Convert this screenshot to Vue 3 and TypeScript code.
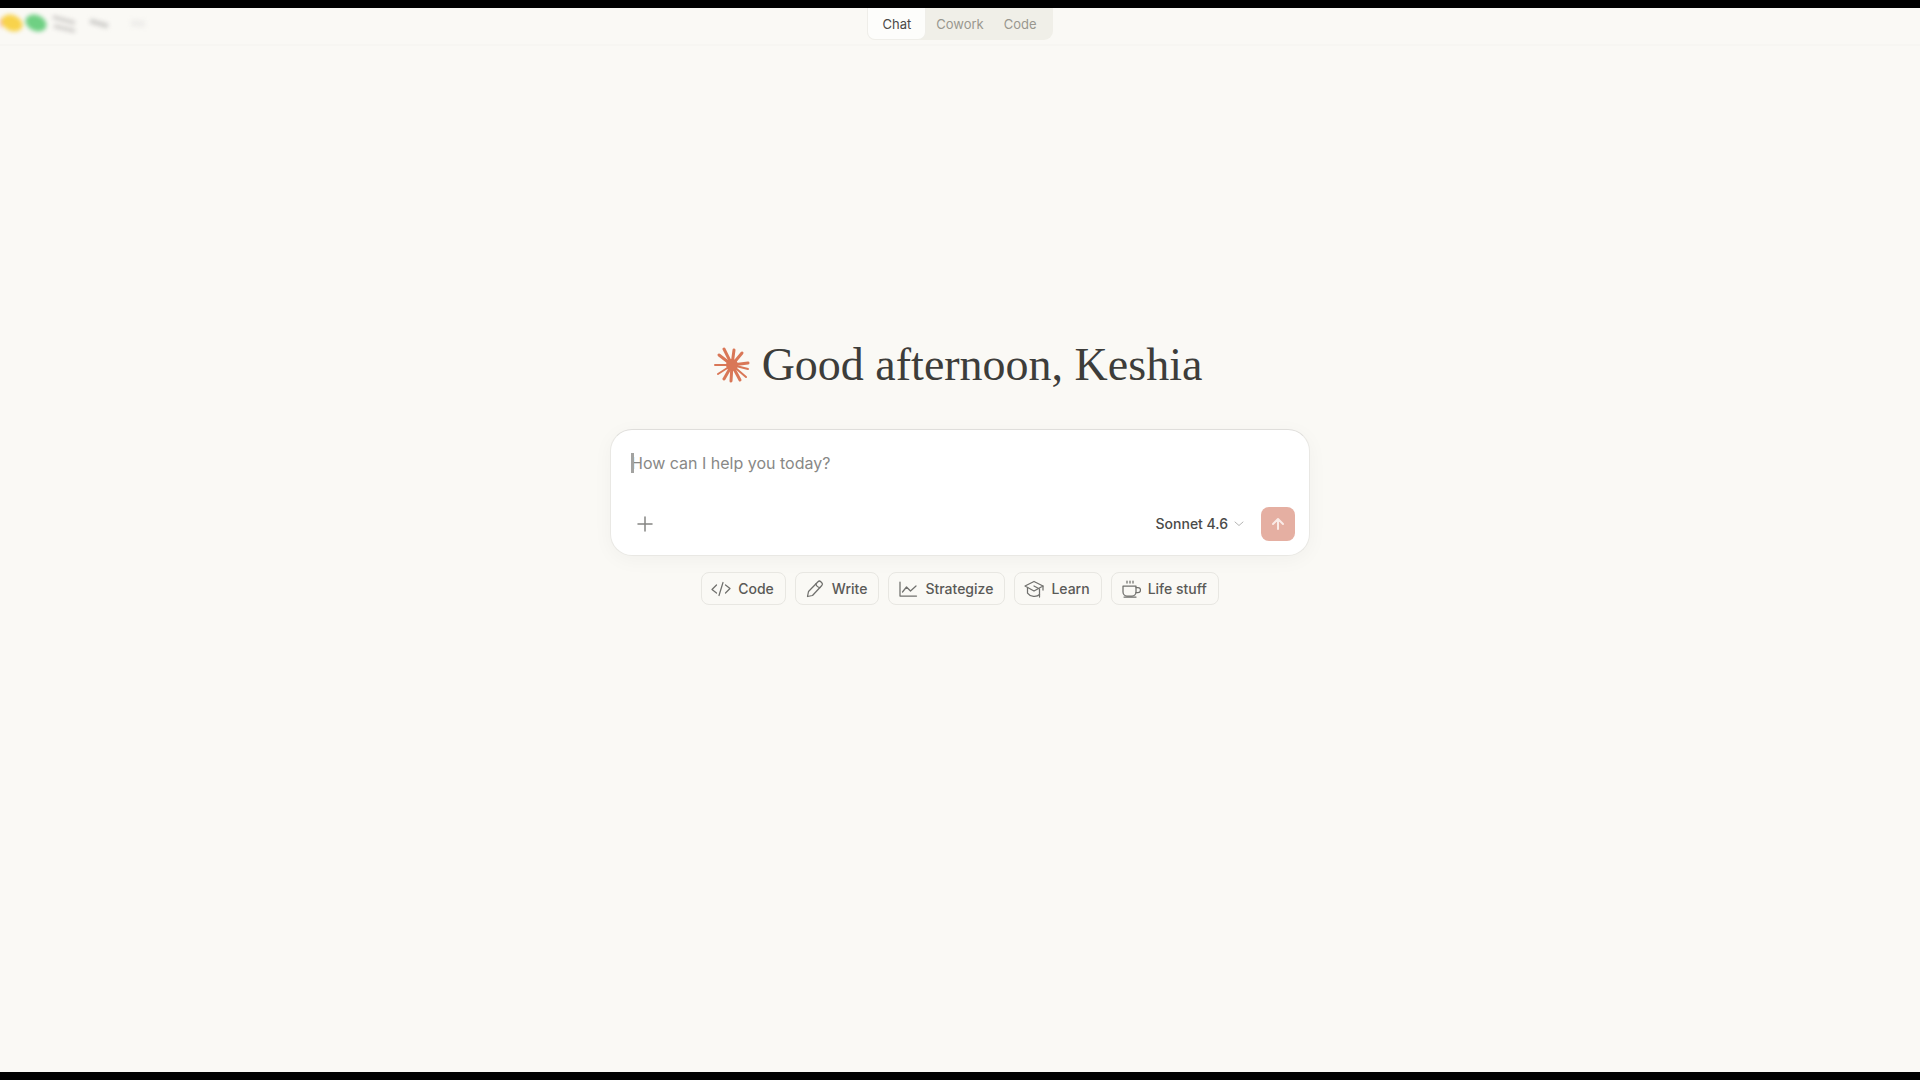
<script setup lang="ts">
import { ref } from 'vue'

type Mode = 'Chat' | 'Cowork' | 'Code'
interface Suggestion {
  label: string
  paths: string[]
}

const modes: Mode[] = ['Chat', 'Cowork', 'Code']
const activeMode = ref<Mode>('Chat')
const prompt = ref('')

const suggestions: Suggestion[] = [
  { label: 'Code', paths: ['M5.5 6 1 10.5 5.5 14', 'M14.5 6 19 9.5 14.5 14', 'M12 3.5 8 16.5'] },
  {
    label: 'Write',
    paths: ['M2.5 17.5 3.500 12.500 13 2.700a2 2 0 0 1 2.800 0l1 1a2 2 0 0 1 0 2.800L7.500 16.500Z', 'M11 4.700c0 2 2 3.800 4 3.800'],
  },
  { label: 'Strategize', paths: ['M2 3v14h16.5', 'M4.5 13 8.5 8l4 4 5.5-5'] },
  {
    label: 'Learn',
    paths: ['M10 2.5 19 7l-9 5-9-5Z', 'M3.5 9v5c3 4 9 4.500 12 1.500', 'M10 7l5.500 3v8', 'M19 7v4'],
  },
  {
    label: 'Life stuff',
    paths: ['M2 7h13v6a4 4 0 0 1-4 4h-5a4 4 0 0 1-4-4Z', 'M15 8.500h2a2 2 0 0 1 0 5h-2', 'M3 18h12', 'M6 2v2M9 2v2M12 2v2'],
  },
]

const rays: [number, number, number][] = [
  [1, 18, 2],
  [5, 8, 3],
  [10, 2, 3],
  [20, 3, 3],
  [28, 6, 3],
  [34, 16, 3],
  [34, 22, 2],
  [32, 30, 2],
  [26, 33, 3],
  [17, 34, 3],
  [10, 32, 3],
  [4, 27, 2],
]
</script>

<template>
  <div class="window">
    <header class="titlebar">
      <svg class="controls" width="160" height="36" viewBox="0 0 160 36" aria-hidden="true">
        <ellipse cx="0" cy="15" rx="2" ry="5" fill="#f7a79c" />
        <ellipse cx="12" cy="15" rx="11" ry="8" transform="rotate(24 12 15)" fill="#f8d34c" />
        <ellipse cx="36" cy="15" rx="11" ry="8" transform="rotate(24 36 15)" fill="#6fd083" />
        <path d="M53 9 75 15M54 18 75 23" stroke="#d3d1ce" stroke-width="4" />
        <path d="M90 13 108 18" stroke="#d2d1ce" stroke-width="5" />
        <path d="M131 15 145 16" stroke="#efeeeb" stroke-width="7" />
      </svg>
      <nav class="modes" aria-label="Mode">
        <button
          v-for="mode in modes"
          :key="mode"
          type="button"
          class="mode"
          :class="{ active: mode === activeMode }"
          @click="activeMode = mode"
        >
          {{ mode }}
        </button>
      </nav>
    </header>

    <main class="home">
      <div class="greeting">
        <svg class="burst" width="36" height="36" viewBox="0 0 36 36" aria-hidden="true">
          <line
            v-for="([x, y, w], i) in rays"
            :key="i"
            x1="18"
            y1="18"
            :x2="x"
            :y2="y"
            :stroke-width="w"
          />
          <circle cx="18" cy="18" r="6" />
        </svg>
        <h1>Good afternoon, Keshia</h1>
      </div>

      <form class="composer" @submit.prevent>
        <div class="field">
          <span class="caret"></span>
          <textarea v-model="prompt" rows="1" aria-label="Message" placeholder="How can I help you today?"></textarea>
        </div>
        <div class="tools">
          <button type="button" class="add" aria-label="Add content">
            <svg width="16" height="16" viewBox="0 0 16 16"><path d="M1 8h14M8 1v14" /></svg>
          </button>
          <button type="button" class="model">
            Sonnet 4.6
            <svg width="10" height="6" viewBox="0 0 10 6"><path d="M1 1 5 4.500 9 1" /></svg>
          </button>
          <button type="submit" class="send" aria-label="Send message">
            <svg width="16" height="16" viewBox="0 0 16 16"><path d="M8 13V3M3 8l5-5 5 5" /></svg>
          </button>
        </div>
      </form>

      <div class="suggestions">
        <button v-for="item in suggestions" :key="item.label" type="button" class="chip">
          <svg width="20" height="20" viewBox="0 0 20 20" aria-hidden="true">
            <path v-for="d in item.paths" :key="d" :d="d" />
          </svg>
          {{ item.label }}
        </button>
      </div>
    </main>
  </div>
</template>

<style>
body {
  margin: 0;
  background: #faf9f5;
}
</style>

<style scoped>
.window {
  box-sizing: border-box;
  min-height: 100vh;
  border: solid #000;
  border-width: 8px 0;
  background: #faf9f5;
  color: #3d3d3a;
  font-family: Inter, "Liberation Sans", sans-serif;
}

button {
  margin: 0;
  padding: 0;
  border: 0;
  background: none;
  color: inherit;
  font: inherit;
  cursor: pointer;
}

svg {
  flex: none;
  fill: none;
  stroke-linecap: round;
  stroke-linejoin: round;
}

.titlebar {
  display: grid;
  grid-template-columns: 1fr auto 1fr;
  align-items: start;
  height: 36px;
  border-bottom: 2px solid #f7f6f2;
}

.controls {
  filter: blur(2px);
  stroke-linecap: butt;
}

.modes {
  display: flex;
  height: 32px;
  padding-right: 6px;
  border-radius: 0 0 9px 9px;
  background: #f0efe8;
}

.mode {
  padding: 0 10px;
  height: 32px;
  color: #99978f;
  font-size: 13px;
  line-height: 32px;
}

.mode.active {
  padding: 0 14px;
  border: solid #efeee9;
  border-width: 0 1px 1px;
  border-radius: 0 0 8px 8px;
  background: #fdfdfb;
  color: #4b4a47;
  box-sizing: border-box;
}

.home {
  display: flex;
  flex-direction: column;
  align-items: center;
  padding: 291px 16px 32px;
}

.greeting {
  display: flex;
  align-items: center;
  gap: 12px;
  padding-right: 4px;
}

.burst {
  stroke: #d97757;
}

.burst circle {
  fill: #d97757;
  stroke: none;
}

h1 {
  margin: 0;
  font: 400 46px/56px "Liberation Serif", serif;
}

.composer {
  box-sizing: border-box;
  width: 100%;
  max-width: 700px;
  margin-top: 36px;
  padding: 19px 14px 14px 20px;
  border: 1px solid #e9e8e4;
  border-top-color: #dfdedb;
  border-radius: 22px;
  background: #fff;
  box-shadow: 0 4px 20px rgba(0, 0, 0, 0.04);
}

.field {
  position: relative;
  display: flex;
}

.caret {
  position: absolute;
  top: 4px;
  left: 0;
  width: 3px;
  height: 20px;
  background: #a3a3a1;
}

textarea {
  flex: 1;
  height: 28px;
  padding: 0;
  border: 0;
  outline: 0;
  resize: none;
  background: none;
  color: #3d3d3a;
  font: 400 16px/28px Inter, "Liberation Sans", sans-serif;
}

textarea::placeholder {
  color: #888886;
  opacity: 1;
}

.tools {
  display: flex;
  align-items: center;
  margin-top: 30px;
}

.add {
  display: flex;
  align-items: center;
  justify-content: center;
  width: 28px;
  height: 32px;
}

.add svg {
  stroke: #858583;
  stroke-width: 1.5;
}

.model {
  display: flex;
  align-items: center;
  gap: 6px;
  margin-left: auto;
  color: #4a4a48;
  font-size: 14px;
  font-weight: 500;
  line-height: 32px;
}

.model svg {
  stroke: #b5b5b3;
}

.send {
  display: flex;
  align-items: center;
  justify-content: center;
  width: 34px;
  height: 34px;
  margin-left: 17px;
  border-radius: 8px;
  background: #e5afa2;
}

.send svg {
  stroke: #faebe7;
  stroke-width: 2;
}

.suggestions {
  display: flex;
  flex-wrap: wrap;
  justify-content: center;
  gap: 9px;
  margin-top: 16px;
}

.chip {
  display: flex;
  align-items: center;
  gap: 7px;
  box-sizing: border-box;
  height: 33px;
  padding: 0 11px 0 9px;
  border: 1px solid #e8e7e2;
  border-radius: 8px;
  color: #5a5a57;
  font-size: 14px;
  font-weight: 500;
}

.chip svg {
  stroke: #70706d;
  stroke-width: 1.25;
}
</style>
